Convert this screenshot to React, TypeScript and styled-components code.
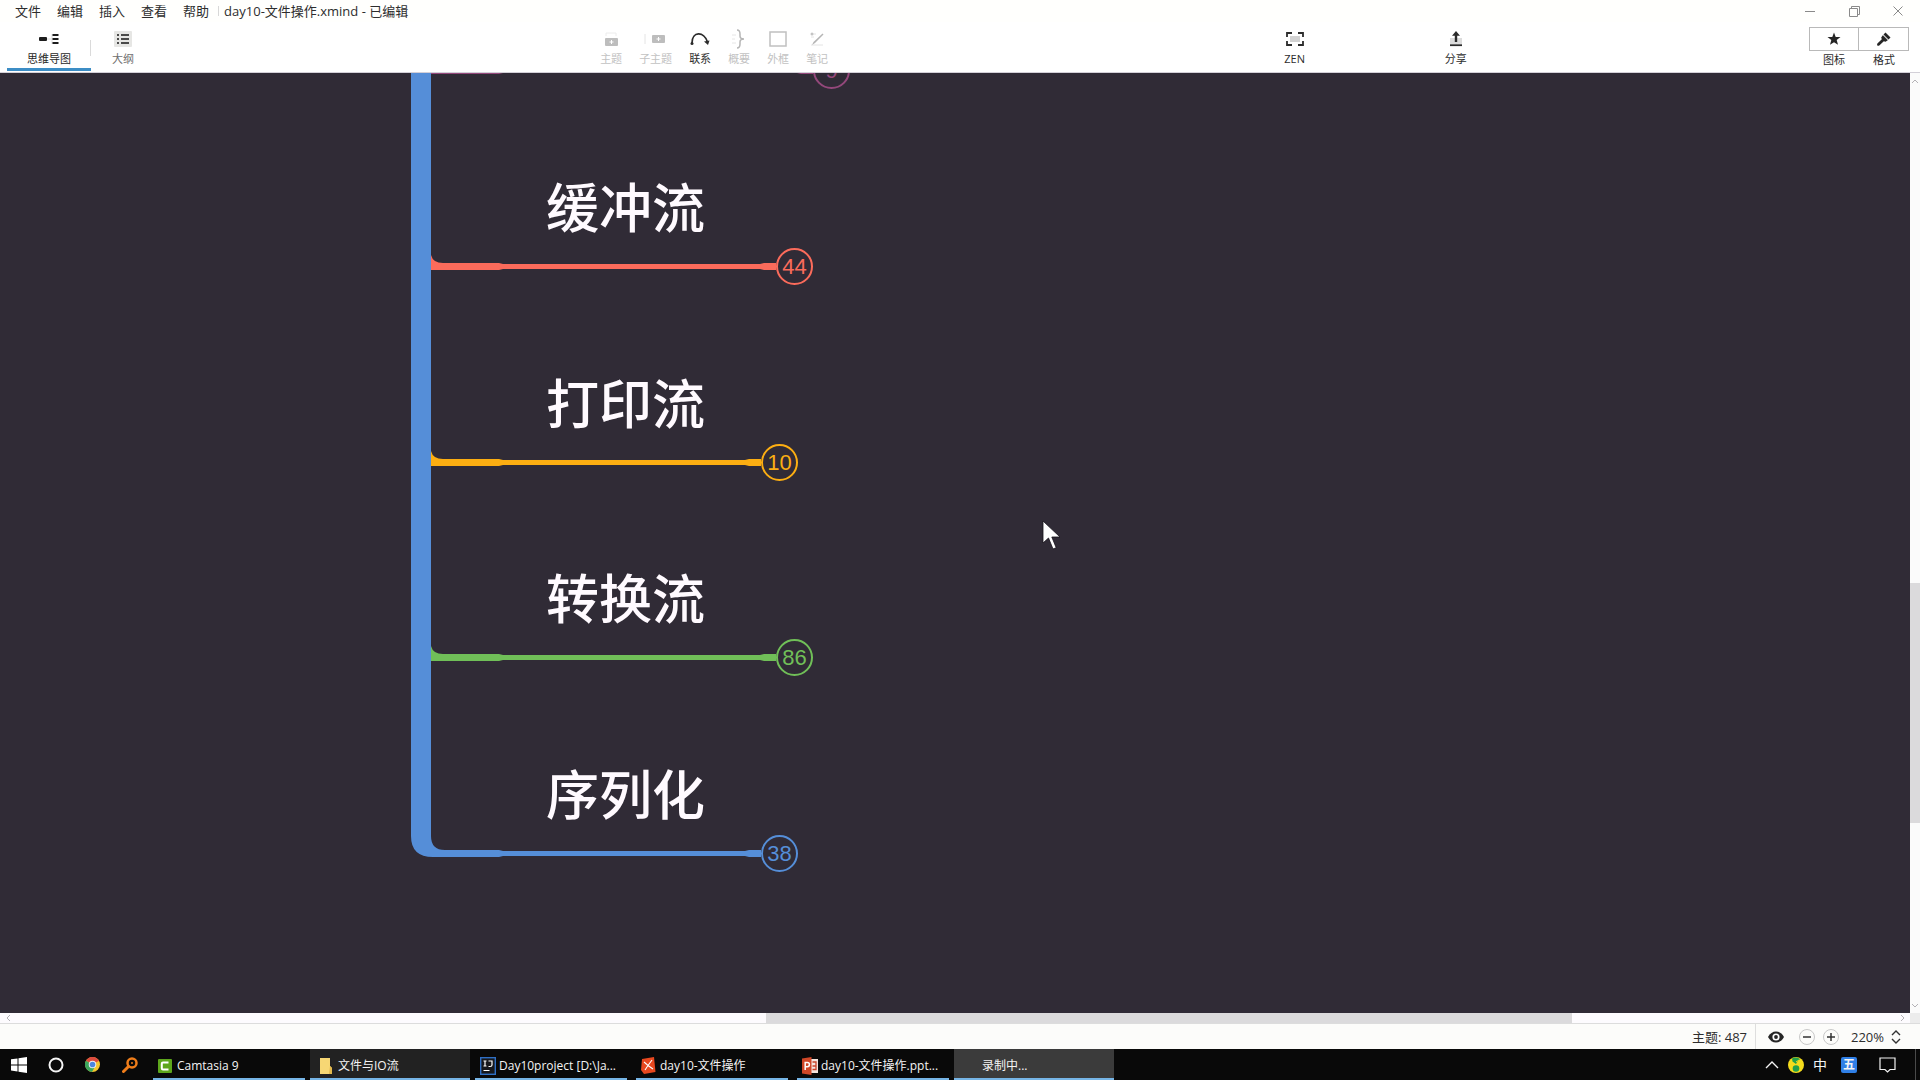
import React from "react";
import styled, { createGlobalStyle } from "styled-components";

const GlobalStyle = createGlobalStyle`
  * { box-sizing: border-box; }
  html, body { margin: 0; padding: 0; }
  body {
    font-family: "Open Sans", "Noto Sans CJK SC", sans-serif;
    font-size: 13px;
    color: #2d2d2d;
    background: #fff;
  }
  button, select {
    font: inherit;
    color: inherit;
    background: none;
    border: 0;
    border-radius: 0;
    padding: 0;
    margin: 0;
  }
  svg { display: block; flex: none; }
`;

const Window = styled.div`
  display: flex;
  flex-direction: column;
  height: 100vh;
  overflow: hidden;
`;

/* ---------- menu bar ---------- */

const MenuBar = styled.header`
  display: flex;
  align-items: center;
  height: 22px;
  padding-left: 7px;
  background: #fffffd;
  flex: none;
`;

const MenuButton = styled.button`
  padding: 0 8px;
  line-height: 18px;
`;

const MenuDivider = styled.span`
  width: 1px;
  height: 10px;
  margin: 0 5px 0 1px;
  background: #d8d8d8;
`;

const FileTitle = styled.span`
  flex: 1;
  line-height: 18px;
  white-space: nowrap;
`;

const WindowButton = styled.button`
  display: grid;
  place-items: center;
  width: 44px;
  height: 22px;
  color: #8a8a8a;
`;

/* ---------- tool bar ---------- */

const ToolBar = styled.div`
  display: flex;
  align-items: flex-start;
  height: 51px;
  padding: 0 11px 0 7px;
  background: #fff;
  border-bottom: 1px solid #d3d0d8;
  flex: none;
`;

const ToolButton = styled.button<{ $muted?: boolean }>`
  display: flex;
  flex-direction: column;
  align-items: center;
  padding-top: 6px;
  font-size: 11px;
  line-height: 18px;
  white-space: nowrap;
  color: ${(p) => (p.$muted ? "#c2c2c2" : "#2d2d2d")};
`;

const ViewTab = styled(ToolButton)<{ $active?: boolean }>`
  height: 49px;
  width: ${(p) => (p.$active ? "84px" : "64px")};
  color: ${(p) => (p.$active ? "#1f1f1f" : "#6e6e6e")};
  border-bottom: 3px solid ${(p) => (p.$active ? "#3c8dc5" : "transparent")};
`;

const TabDivider = styled.span`
  width: 1px;
  height: 16px;
  margin: 18px 0 0 -1px;
  background: #dadada;
`;

const IconSlot = styled.span`
  display: grid;
  place-items: center;
  height: 22px;
`;

const ToolGroup = styled.div`
  display: flex;
  gap: 17px;
`;

const Spacer = styled.span<{ $grow: number }>`
  flex: ${(p) => p.$grow} 0 0;
`;

const PanelButton = styled(ToolButton)`
  width: 50px;
  padding-top: 5px;

  & + & > span { border-left: 0; }
`;

const PanelBox = styled.span`
  display: grid;
  place-items: center;
  width: 100%;
  height: 24px;
  border: 1px solid #b9b9b9;
`;

/* ---------- canvas ---------- */

const Workspace = styled.main`
  display: grid;
  grid-template-columns: minmax(0, 1fr) 10px;
  grid-template-rows: minmax(0, 1fr) 10px;
  flex: 1;
  min-height: 0;
`;

const Canvas = styled.section`
  position: relative;
  overflow: hidden;
  background: #302b36;
`;

const Connectors = styled.svg`
  position: absolute;
  left: 0;
  top: 0;
`;

const Topic = styled.div`
  position: absolute;
  left: 546px;
  color: #fffaff;
  font-size: 53px;
  line-height: 80px;
  font-weight: 500;
  font-family: "Noto Sans CJK SC", sans-serif;
  white-space: nowrap;
`;

const CountBadge = styled.button<{ $color: string }>`
  position: absolute;
  width: 37px;
  height: 37px;
  border: 2px solid ${(p) => p.$color};
  border-radius: 50%;
  color: ${(p) => p.$color};
  font: 22px/33px "Liberation Sans", Arial, sans-serif;
  text-align: center;
`;

const Pointer = styled.svg`
  position: absolute;
  left: 1041px;
  top: 446px;
`;

const VerticalScroll = styled.div`
  display: grid;
  grid-template-rows: 15px 495fr 240fr 175fr 15px;
  background: #fbfbfb;
`;

const HorizontalScroll = styled.div`
  display: grid;
  grid-template-columns: 15px 751fr 806fr 323fr 15px;
  background: #fdfbfe;
`;

const ScrollArrow = styled.button`
  display: grid;
  place-items: center;
  color: #b4b2b6;
`;

const ScrollThumb = styled.div`
  background: #dbdadc;
`;

const ScrollCorner = styled.div`
  background: #ececec;
`;

/* ---------- status bar ---------- */

const StatusBar = styled.footer`
  display: flex;
  align-items: center;
  justify-content: flex-end;
  height: 26px;
  padding-right: 19px;
  background: #fcfcfa;
  border-top: 1px solid #dcdcdc;
  flex: none;
`;

const TopicCount = styled.span`
  display: flex;
  align-items: center;
  height: 25px;
  padding-right: 8px;
  border-right: 1px solid #dedede;
`;

const EyeButton = styled.button`
  padding: 0 15px 0 12px;
`;

const RoundButton = styled.button`
  display: grid;
  place-items: center;
  width: 16px;
  height: 16px;
  margin-right: 8px;
  border: 1px solid #c9c9c9;
  border-radius: 50%;
`;

const ZoomField = styled.label`
  display: flex;
  align-items: center;
  padding-left: 4px;
`;

const ZoomSelect = styled.select`
  appearance: none;
  width: 40px;
  outline: none;
`;

/* ---------- task bar ---------- */

const TaskBar = styled.nav`
  display: flex;
  height: 31px;
  background: #090909;
  color: #f4f4f4;
  font-size: 12px;
  flex: none;
`;

const QuickButton = styled.button`
  display: grid;
  place-items: center;
  width: 37px;
`;

const Tasks = styled.div`
  display: flex;
  flex: 1;
  gap: 1px;
  padding-left: 1px;
  min-width: 0;
`;

const Task = styled.button<{ $shade?: string }>`
  display: flex;
  flex-direction: column;
  width: 160px;
  padding: 0 ${(p) => (p.$shade ? "0" : "4px")};
  background: ${(p) => p.$shade || "transparent"};

  &::after {
    content: "";
    width: 100%;
    height: 2px;
    background: #76b5e6;
  }
`;

const TaskLabel = styled.span<{ $shade?: string }>`
  display: grid;
  grid-template-columns: 16px 1fr;
  gap: 3px;
  align-items: center;
  height: 29px;
  padding-left: ${(p) => (p.$shade ? "9px" : "5px")};
  padding-top: 4px;
  line-height: 18px;
  text-align: left;
  white-space: nowrap;
`;

const Tray = styled.div`
  display: flex;
  align-items: center;
  padding-right: 4px;
`;

const TrayButton = styled.button`
  display: grid;
  place-items: center;
  width: 24px;
  font-size: 14px;
  line-height: 20px;
`;

const WubiButton = styled(TrayButton)`
  width: 16px;
  height: 16px;
  margin: 0 22px 0 9px;
  border-radius: 2px;
  background: #2f7fe6;
  font-size: 12px;
  line-height: 16px;
  font-weight: 700;
`;

const DesktopEdge = styled.span`
  width: 1px;
  height: 31px;
  margin-left: 19px;
  background: #4a4a4a;
`;

/* ---------- icons ---------- */

const MindMapIcon = () => (
  <svg width="20" height="12" viewBox="0 0 20 12">
    <path d="M8 6h5M13 1v10" stroke="#dadada" fill="none" />
    <rect x="0" y="4" width="8" height="4" rx="1" fill="#1d1d1d" />
    <path d="M13.500 2h6M13.500 6h6M13.500 10h6" stroke="#1d1d1d" strokeWidth="1.800" />
  </svg>
);

const OutlineIcon = () => (
  <svg width="18" height="16" viewBox="0 0 18 16">
    <rect width="18" height="16" rx="1" fill="#e6e6e4" />
    <path d="M3 4h2M3 8h2M3 12h2M7 4h8M7 8h8M7 12h8" stroke="#4a4a4a" strokeWidth="1.800" />
  </svg>
);

const TopicIcon = () => (
  <svg width="18" height="18" viewBox="0 0 18 18">
    <path d="M4 3h10M4 3v3M14 3v3" stroke="#ececec" fill="none" />
    <rect x="3" y="8" width="13" height="8" rx="1" fill="#bdbdbd" />
    <path d="M9.500 10v4M7.500 12h4" stroke="#fff" />
  </svg>
);

const SubTopicIcon = () => (
  <svg width="24" height="18" viewBox="0 0 24 18">
    <path d="M1 4v10" stroke="#e4e4e4" fill="none" />
    <rect x="8" y="5" width="13" height="8" rx="1" fill="#bdbdbd" />
    <path d="M14.500 7v4M12.500 9h4" stroke="#fff" />
  </svg>
);

const RelationIcon = () => (
  <svg width="20" height="14" viewBox="0 0 20 14">
    <path d="M2 11C2 -1 14 -1 17.500 10" stroke="#2b2b2b" strokeWidth="1.700" fill="none" />
    <circle cx="2" cy="11.500" r="1.500" fill="#2b2b2b" />
    <path d="M14 9.500l5.500-1-1.500 4.500z" fill="#2b2b2b" />
  </svg>
);

const SummaryIcon = () => (
  <svg width="16" height="20" viewBox="0 0 16 20">
    <path d="M1 6h4M1 10h3M1 14h4" stroke="#e6e6e6" />
    <path d="M6 1q3 0 3 4v2q0 3 4 3q-4 0-4 3v2q0 4-3 4" stroke="#b5b5b5" strokeWidth="1.500" fill="none" />
  </svg>
);

const BoundaryIcon = () => (
  <svg width="18" height="16" viewBox="0 0 18 16">
    <rect x="1" y="1" width="16" height="14" fill="none" stroke="#c0c0c0" strokeWidth="1.500" />
  </svg>
);

const NotesIcon = () => (
  <svg width="16" height="16" viewBox="0 0 16 16">
    <path d="M2 3h5M2 6h3M2 14h12" stroke="#e4e4e4" />
    <path d="M3 14l1.500-3L13.500 2.500l1 1L6 12z" fill="#b5b5b5" />
    <circle cx="3" cy="3" r="1.500" fill="#c4c4c4" />
  </svg>
);

const ZenIcon = () => (
  <svg width="18" height="14" viewBox="0 0 18 14">
    <rect x="4" y="4" width="10" height="6" fill="#d2d2d2" />
    <path d="M1 5V1h5M12 1h5v4M17 9v4h-5M6 13H1V9" stroke="#2b2b2b" strokeWidth="1.800" fill="none" />
  </svg>
);

const ShareIcon = () => (
  <svg width="14" height="16" viewBox="0 0 14 16">
    <rect x="1" y="7" width="12" height="6" fill="#dcdcdc" />
    <path d="M1 14.200h12" stroke="#2b2b2b" strokeWidth="1.800" />
    <path d="M7 0l4 4.800H8.200V11H5.800V4.800H3z" fill="#2b2b2b" />
  </svg>
);

const StarIcon = () => (
  <svg width="14" height="14" viewBox="0 0 14 14">
    <path d="M7 .5l1.700 4.400 4.800.2-3.800 3 1.300 4.700L7 10.200l-4 2.600 1.300-4.700-3.800-3 4.800-.2z" fill="#262626" />
  </svg>
);

const BrushIcon = () => (
  <svg width="14" height="14" viewBox="0 0 14 14">
    <path d="M8.500.5l5 5-2 2-5-5z" fill="#262626" />
    <path d="M5.800 3.300l5 5-2.300 1.500-1.700-.5-4.500 4.300q-1.300.5-1.900-.1t0-1.900l4.400-4.400-.6-1.700z" fill="#262626" />
    <path d="M6.200 3l5 5" stroke="#999" strokeWidth=".6" />
  </svg>
);

const EyeIcon = () => (
  <svg width="16" height="12" viewBox="0 0 16 12">
    <path d="M0 6Q3 .5 8 .5T16 6q-3 5.500-8 5.500T0 6z" fill="#262626" />
    <circle cx="8" cy="6" r="3.600" fill="#fff" />
    <circle cx="8" cy="6" r="1.900" fill="#262626" />
  </svg>
);

const Chevron = ({ d }: { d: string }) => (
  <svg width="8" height="8" viewBox="0 0 8 8">
    <path d={d} stroke="currentColor" fill="none" />
  </svg>
);

const WindowsIcon = () => (
  <svg width="16" height="16" viewBox="0 0 16 16" fill="#fff">
    <path d="M0 2.300l6.500-.9v6H0zM7.500 1.200L16 0v7.400H7.500zM0 8.500h6.500v6L0 13.600zM7.500 8.500H16V16l-8.500-1.200z" />
  </svg>
);

const ChromeIcon = () => (
  <svg width="15" height="15" viewBox="0 0 16 16">
    <circle cx="8" cy="8" r="8" fill="#f4c52f" />
    <path d="M8 8L1 4a8 8 0 0 1 14 0z" fill="#dc4b3e" />
    <path d="M8 8L1 4a8 8 0 0 0 6.500 12L11 9.500z" fill="#3ba55c" />
    <circle cx="8" cy="8" r="4" fill="#f3f3f3" />
    <circle cx="8" cy="8" r="3" fill="#4a86e0" />
  </svg>
);

const SearchIcon = () => (
  <svg width="16" height="16" viewBox="0 0 16 16" fill="none" stroke="#ef7d1a">
    <circle cx="10" cy="6" r="4.500" strokeWidth="2.500" />
    <path d="M6.500 9.500L1.500 14.500" strokeWidth="3" strokeLinecap="round" />
    <circle cx="10" cy="6" r="1" fill="#ef7d1a" stroke="none" />
  </svg>
);

const CamtasiaIcon = () => (
  <svg width="14" height="14" viewBox="0 0 14 14">
    <rect width="14" height="14" rx="1" fill="#5da61c" />
    <path d="M10.500 3.500H5Q3.800 3.500 3.800 4.800v4.400q0 1.300 1.200 1.300h5.500" stroke="#fff" strokeWidth="2" fill="none" />
  </svg>
);

const FolderIcon = () => (
  <svg width="14" height="16" viewBox="0 0 14 16">
    <path d="M1 0h10v8l2 2v6H1z" fill="#f7d774" />
    <path d="M11 8l2 2v6h-3z" fill="#e3b94c" />
  </svg>
);

const IdeaIcon = () => (
  <svg width="16" height="18" viewBox="0 0 16 18">
    <rect x=".7" y=".7" width="14.600" height="16.600" fill="#17181c" stroke="#2f6fc4" strokeWidth="1.400" />
    <path d="M3.500 4h3M5 4v5M3.500 9h3M8.500 4H12v4q0 1.500-2 1.500H8.500M3.500 13.500h6" stroke="#fff" strokeWidth="1.200" fill="none" />
  </svg>
);

const XmindIcon = () => (
  <svg width="15" height="17" viewBox="0 0 15 17">
    <path d="M1 2l12-2 1.500 15L3 17 0 13z" fill="#e8481f" />
    <path d="M3 5l4 3.500L11 3M7 8.500L4 13M7 8.500l5 3.500" stroke="#fff" strokeWidth="1.100" fill="none" />
  </svg>
);

const PowerPointIcon = () => (
  <svg width="16" height="18" viewBox="0 0 16 18">
    <rect x="8" y="2" width="8" height="14" fill="#f5e5df" />
    <path d="M10.500 5h3.500v4h-3.500M14 9v3.500h-3.500" stroke="#c9442a" strokeWidth="1.300" fill="none" />
    <path d="M0 1.500L9.500 0v18L0 16.500z" fill="#d04727" />
    <path d="M3.200 13V5.500h2.200q2 0 2 2.100t-2 2.200H3.500" stroke="#fff" strokeWidth="1.500" fill="none" />
  </svg>
);

const BallIcon = () => (
  <svg width="16" height="16" viewBox="0 0 16 16">
    <circle cx="8" cy="8" r="8" fill="#f5dc1c" />
    <path d="M4 1.500q4-2 8 .5l-2.500 2.500L8 7 4.500 4.500z" fill="#22a04b" />
    <path d="M8 5l3-2" stroke="#f5dc1c" />
    <circle cx="8" cy="11.500" r="3.300" fill="#22a04b" />
  </svg>
);

const NoticeIcon = () => (
  <svg width="17" height="16" viewBox="0 0 17 16">
    <path d="M1 1h15v11.500h-5L8.500 15 6 12.500H1z" fill="none" stroke="#f4f4f4" strokeWidth="1.200" />
  </svg>
);

/* ---------- data ---------- */

const menus = ["文件", "编辑", "插入", "查看", "帮助"];

const tools = [
  { label: "主题", icon: <TopicIcon />, muted: true },
  { label: "子主题", icon: <SubTopicIcon />, muted: true },
  { label: "联系", icon: <RelationIcon />, muted: false },
  { label: "概要", icon: <SummaryIcon />, muted: true },
  { label: "外框", icon: <BoundaryIcon />, muted: true },
  { label: "笔记", icon: <NotesIcon />, muted: true },
];

type Branch = { title?: string; count: number; color: string; y: number; badgeX: number; root?: boolean };

// y is the centre of the branch line, badgeX the centre of its count, in canvas coordinates
const branches: Branch[] = [
  { count: 9, color: "#94487b", y: -3, badgeX: 831 },
  { title: "缓冲流", count: 44, color: "#fb6b5b", y: 193, badgeX: 794 },
  { title: "打印流", count: 10, color: "#fcae12", y: 389, badgeX: 779 },
  { title: "转换流", count: 86, color: "#70bf58", y: 584, badgeX: 794 },
  { title: "序列化", count: 38, color: "#558ed8", y: 780, badgeX: 779, root: true },
];

const tasks = [
  { label: "Camtasia 9", icon: <CamtasiaIcon /> },
  { label: "文件与IO流", icon: <FolderIcon />, shade: "#222222" },
  { label: "Day10project [D:\\Ja...", icon: <IdeaIcon /> },
  { label: "day10-文件操作", icon: <XmindIcon /> },
  { label: "day10-文件操作.ppt...", icon: <PowerPointIcon /> },
  { label: "录制中...", icon: <span />, shade: "#3b3b3b" },
];

const BranchLine = ({ color, y, badgeX, root }: Branch) => {
  const end = badgeX - 18;
  return (
    <g fill={color}>
      {!root && <path d={`M431 ${y - 11}q2 8 12 8v7h-12z`} />}
      <path
        d={`M440 ${y - 3}H499L503 ${y - 2}H${end - 16}L${end - 12} ${y - 3}H${end}V${y + 4}H${end - 12}L${end - 16} ${y + 3}H503L499 ${y + 4}H440z`}
      />
    </g>
  );
};

export default function App() {
  return (
    <Window>
      <GlobalStyle />
      <MenuBar>
        {menus.map((m) => (
          <MenuButton key={m}>{m}</MenuButton>
        ))}
        <MenuDivider />
        <FileTitle>day10-文件操作.xmind - 已编辑</FileTitle>
        <WindowButton aria-label="最小化">
          <svg width="10" height="10" viewBox="0 0 10 10">
            <path d="M0 5.500h10" stroke="currentColor" />
          </svg>
        </WindowButton>
        <WindowButton aria-label="还原">
          <svg width="11" height="11" viewBox="0 0 11 11">
            <path d="M.5 2.500h8v8h-8zM2.500 2.500v-2h8v8h-2" stroke="currentColor" fill="none" />
          </svg>
        </WindowButton>
        <WindowButton aria-label="关闭">
          <svg width="10" height="10" viewBox="0 0 10 10">
            <path d="M.5.5l9 9M9.500.5l-9 9" stroke="currentColor" />
          </svg>
        </WindowButton>
      </MenuBar>

      <ToolBar>
        <ViewTab $active>
          <IconSlot><MindMapIcon /></IconSlot>
          思维导图
        </ViewTab>
        <TabDivider />
        <ViewTab>
          <IconSlot><OutlineIcon /></IconSlot>
          大纲
        </ViewTab>
        <Spacer $grow={446} />
        <ToolGroup>
          {tools.map((t) => (
            <ToolButton key={t.label} $muted={t.muted} disabled={t.muted}>
              <IconSlot>{t.icon}</IconSlot>
              {t.label}
            </ToolButton>
          ))}
        </ToolGroup>
        <Spacer $grow={457} />
        <ToolButton>
          <IconSlot><ZenIcon /></IconSlot>
          ZEN
        </ToolButton>
        <Spacer $grow={140} />
        <ToolButton>
          <IconSlot><ShareIcon /></IconSlot>
          分享
        </ToolButton>
        <Spacer $grow={343} />
        <PanelButton>
          <PanelBox><StarIcon /></PanelBox>
          图标
        </PanelButton>
        <PanelButton>
          <PanelBox><BrushIcon /></PanelBox>
          格式
        </PanelButton>
      </ToolBar>

      <Workspace>
        <Canvas>
          <Connectors width="900" height="800" viewBox="0 0 900 800">
            {branches.map((b) => (
              <BranchLine key={b.count} {...b} />
            ))}
            <path d="M411 0h20v763q0 14 14 14v7h-12q-22 0-22-21z" fill="#558ed8" />
          </Connectors>
          {branches.map((b) => (
            <React.Fragment key={b.count}>
              {b.title && <Topic style={{ top: b.y - 101 }}>{b.title}</Topic>}
              <CountBadge $color={b.color} style={{ left: b.badgeX - 18, top: b.y - 18 }}>
                {b.count}
              </CountBadge>
            </React.Fragment>
          ))}
          <Pointer width="22" height="32" viewBox="0 0 22 32">
            <path
              d="M2 2v22l5.500-5 4.500 11 3.200-1.300L10.800 18H19z"
              fill="#fff"
              stroke="#15121a"
              strokeWidth=".8"
            />
          </Pointer>
        </Canvas>
        <VerticalScroll>
          <ScrollArrow aria-label="向上"><Chevron d="M1 6l3-3 3 3" /></ScrollArrow>
          <span />
          <ScrollThumb />
          <span />
          <ScrollArrow aria-label="向下"><Chevron d="M1 2l3 3 3-3" /></ScrollArrow>
        </VerticalScroll>
        <HorizontalScroll>
          <ScrollArrow aria-label="向左"><Chevron d="M6 1L3 4l3 3" /></ScrollArrow>
          <span />
          <ScrollThumb />
          <span />
          <ScrollArrow aria-label="向右"><Chevron d="M2 1l3 3-3 3" /></ScrollArrow>
        </HorizontalScroll>
        <ScrollCorner />
      </Workspace>

      <StatusBar>
        <TopicCount>主题: 487</TopicCount>
        <EyeButton aria-label="显示"><EyeIcon /></EyeButton>
        <RoundButton aria-label="缩小">
          <svg width="8" height="8" viewBox="0 0 8 8"><path d="M0 4h8" stroke="#333" strokeWidth="1.500" /></svg>
        </RoundButton>
        <RoundButton aria-label="放大">
          <svg width="8" height="8" viewBox="0 0 8 8"><path d="M0 4h8M4 0v8" stroke="#333" strokeWidth="1.500" /></svg>
        </RoundButton>
        <ZoomField>
          <ZoomSelect aria-label="缩放" defaultValue="220%">
            <option>100%</option>
            <option>220%</option>
          </ZoomSelect>
          <svg width="10" height="14" viewBox="0 0 10 14">
            <path d="M1 5l4-4 4 4M1 9l4 4 4-4" stroke="#333" strokeWidth="1.400" fill="none" />
          </svg>
        </ZoomField>
      </StatusBar>

      <TaskBar>
        <QuickButton aria-label="开始"><WindowsIcon /></QuickButton>
        <QuickButton aria-label="Cortana">
          <svg width="16" height="16" viewBox="0 0 16 16">
            <circle cx="8" cy="8" r="6.500" fill="none" stroke="#f4f4f4" strokeWidth="2" />
          </svg>
        </QuickButton>
        <QuickButton aria-label="Chrome"><ChromeIcon /></QuickButton>
        <QuickButton aria-label="搜索"><SearchIcon /></QuickButton>
        <Tasks>
          {tasks.map((t) => (
            <Task key={t.label} $shade={t.shade}>
              <TaskLabel $shade={t.shade}>
                {t.icon}
                {t.label}
              </TaskLabel>
            </Task>
          ))}
        </Tasks>
        <Tray>
          <TrayButton aria-label="显示隐藏的图标">
            <svg width="14" height="8" viewBox="0 0 14 8">
              <path d="M1 7l6-6 6 6" stroke="#f4f4f4" strokeWidth="1.400" fill="none" />
            </svg>
          </TrayButton>
          <TrayButton aria-label="安全卫士"><BallIcon /></TrayButton>
          <TrayButton>中</TrayButton>
          <WubiButton>五</WubiButton>
          <NoticeIcon />
          <DesktopEdge />
        </Tray>
      </TaskBar>
    </Window>
  );
}
